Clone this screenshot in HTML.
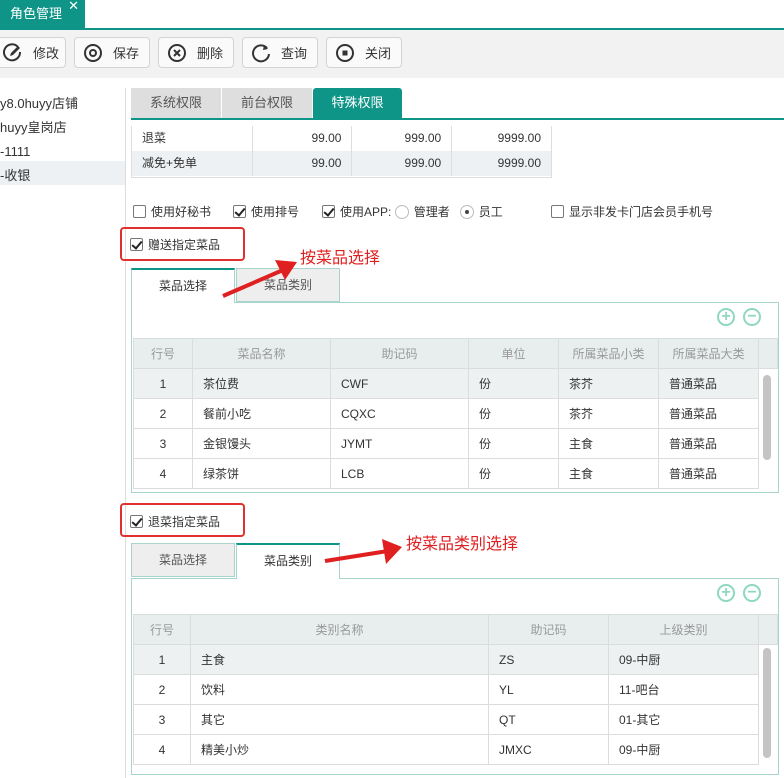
<!DOCTYPE html>
<html><head><meta charset="utf-8"><style>
*{margin:0;padding:0;box-sizing:border-box}
body{width:784px;height:778px;overflow:hidden;background:#fff;font-family:"Liberation Sans","Noto Sans CJK SC",sans-serif;font-size:12px;color:#333;position:relative}
.a{position:absolute}
.btn{position:absolute;top:37px;height:31px;border:1px solid #d4d4d4;border-radius:4px;background:#fafafa;font-size:13px;display:flex;align-items:center;padding-left:8px;gap:10px;color:#333}
.btn svg{width:20px;height:20px}
table{border-collapse:collapse;table-layout:fixed}
td{border:1px solid #dcdcdc;height:30px;padding:0 10px;white-space:nowrap}
th{border:1px solid #d8dede;height:30px;font-weight:normal;color:#999;background:#e8eeee}
.cb{display:inline-block;width:13px;height:13px;border:1px solid #777;border-radius:2px;vertical-align:-2px;margin-right:5px;position:relative;background:#fff}
.cb.on::after{content:"";position:absolute;left:3px;top:0px;width:4px;height:8px;border:solid #222;border-width:0 2px 2px 0;transform:rotate(40deg)}
.rd{display:inline-block;width:14px;height:14px;border:1px solid #bbb;border-radius:50%;vertical-align:-3px;margin-right:5px;position:relative}
.rd.on::after{content:"";position:absolute;left:4px;top:4px;width:4px;height:4px;border-radius:50%;background:#444}
.red{position:absolute;border:2px solid #e03030;border-radius:4px}
.tab{position:absolute;height:34px;text-align:center;line-height:32px;font-size:12px;border:1px solid #a8d4cc}
.panel{position:absolute;left:131px;width:648px;border:1px solid #a8d4cc}
.ic{position:absolute;width:18px;height:18px;border:2px solid #8fd8c0;border-radius:50%;color:#8fd8c0;font-weight:bold;text-align:center;line-height:13px;font-size:16px}
.sb{position:absolute;width:8px;background:#c4c4c4;border-radius:4px}
.hl td{background:#edf1f2}
</style></head><body>
<div class="a" style="left:0;top:0;width:85px;height:29px;background:#0f9488;color:#fff;font-size:13px;line-height:28px;padding-left:10px">角色管理<span style="position:absolute;right:6px;top:-8px;font-size:13px">✕</span></div>
<div class="a" style="left:0;top:28px;width:784px;height:2px;background:#0f9488"></div>
<div class="a" style="left:0;top:30px;width:784px;height:48px;background:#f2f2f2"></div>
<div class="btn" style="left:-6px;width:72px"><svg viewBox="0 0 20 20"><path d="M15 4A8 8 0 1 0 17 9" fill="none" stroke="#333" stroke-width="2"/><path d="M7 13l1-3 7-7 2 2-7 7z" fill="#333"/></svg>修改</div>
<div class="btn" style="left:74px;width:76px"><svg viewBox="0 0 20 20"><circle cx="10" cy="10" r="8" fill="none" stroke="#333" stroke-width="2"/><circle cx="10" cy="10" r="3" fill="none" stroke="#333" stroke-width="2"/></svg>保存</div>
<div class="btn" style="left:158px;width:76px"><svg viewBox="0 0 20 20"><circle cx="10" cy="10" r="8" fill="none" stroke="#333" stroke-width="2"/><path d="M7 7l6 6M13 7l-6 6" stroke="#333" stroke-width="2"/></svg>删除</div>
<div class="btn" style="left:242px;width:76px"><svg viewBox="0 0 20 20"><path d="M16 5A8 8 0 1 0 18 11" fill="none" stroke="#333" stroke-width="2"/><path d="M13 2l4 4-5 1z" fill="#333"/></svg>查询</div>
<div class="btn" style="left:326px;width:76px"><svg viewBox="0 0 20 20"><circle cx="10" cy="10" r="8" fill="none" stroke="#333" stroke-width="2"/><rect x="7.5" y="7.5" width="5" height="5" fill="#333"/></svg>关闭</div>
<div class="a" style="left:125px;top:88px;width:1px;height:690px;background:#ddd"></div>
<div class="a" style="left:0;top:161px;width:125px;height:24px;background:#eef1f4"></div>
<div class="a" style="left:0;top:92px;font-size:13px;line-height:24px">y8.0huyy店铺<br>huyy皇岗店<br>-1111<br>-收银</div>
<div class="a" style="left:131px;top:88px;width:90px;height:30px;background:#dedede;text-align:center;line-height:30px;color:#555;font-size:13px">系统权限</div>
<div class="a" style="left:222px;top:88px;width:90px;height:30px;background:#dedede;text-align:center;line-height:30px;color:#555;font-size:13px">前台权限</div>
<div class="a" style="left:313px;top:88px;width:89px;height:30px;background:#0f9488;border-radius:3px 3px 0 0;text-align:center;line-height:30px;color:#fff;font-size:13px">特殊权限</div>
<div class="a" style="left:131px;top:118px;width:653px;height:2px;background:#0f9488"></div>
<div class="a" style="left:131px;top:126px;width:421px;height:52px;border:1px solid #ddd;border-top:none;font-size:12px">
<div style="height:25px;display:flex;line-height:25px"><div style="width:120px;padding-left:10px">退菜</div><div style="width:100px;text-align:right;padding-right:10px;border-left:1px solid #ddd">99.00</div><div style="width:100px;text-align:right;padding-right:10px;border-left:1px solid #ddd">999.00</div><div style="width:100px;text-align:right;padding-right:10px;border-left:1px solid #ddd">9999.00</div></div>
<div style="height:25px;display:flex;line-height:25px;background:#edf1f4"><div style="width:120px;padding-left:10px">减免+免单</div><div style="width:100px;text-align:right;padding-right:10px;border-left:1px solid #ddd">99.00</div><div style="width:100px;text-align:right;padding-right:10px;border-left:1px solid #ddd">999.00</div><div style="width:100px;text-align:right;padding-right:10px;border-left:1px solid #ddd">9999.00</div></div>
</div>
<div class="a" style="left:133px;top:203px;font-size:12px;white-space:nowrap"><span class="cb"></span>使用好秘书</div>
<div class="a" style="left:233px;top:203px"><span class="cb on"></span>使用排号</div>
<div class="a" style="left:322px;top:203px;white-space:nowrap"><span class="cb on"></span>使用APP: <span class="rd"></span>管理者 &nbsp;&nbsp;<span class="rd on"></span>员工</div>
<div class="a" style="left:551px;top:203px;white-space:nowrap"><span class="cb"></span>显示非发卡门店会员手机号</div>
<div class="red" style="left:120px;top:227px;width:125px;height:34px"></div>
<div class="a" style="left:130px;top:236px"><span class="cb on"></span>赠送指定菜品</div>
<div class="a" style="left:300px;top:244px;color:#e02020;font-size:16px">按菜品选择</div>
<div class="panel" style="top:302px;height:191px"></div>
<div class="tab" style="left:131px;top:268px;width:104px;background:#fff;border-top:2px solid #0f9488;border-bottom:none;height:35px;color:#333">菜品选择</div>
<div class="tab" style="left:236px;top:268px;width:104px;background:#eee;color:#555">菜品类别</div>
<svg class="a" style="left:215px;top:250px" width="90" height="55"><path d="M8 46L68 20" stroke="#e02020" stroke-width="4"/><path d="M60 10L82 12 70 30z" fill="#e02020"/></svg>
<div class="ic" style="left:717px;top:308px">+</div><div class="ic" style="left:743px;top:308px">−</div>
<table class="a" style="left:133px;top:338px;width:644px">
<colgroup><col style="width:59px"><col style="width:138px"><col style="width:138px"><col style="width:90px"><col style="width:100px"><col style="width:100px"><col style="width:19px"></colgroup>
<tr><th>行号</th><th>菜品名称</th><th>助记码</th><th>单位</th><th>所属菜品小类</th><th>所属菜品大类</th><th></th></tr>
<tr class="hl"><td style="text-align:center">1</td><td>茶位费</td><td>CWF</td><td>份</td><td>茶芥</td><td>普通菜品</td><td style="background:#fff;border:none"></td></tr>
<tr><td style="text-align:center">2</td><td>餐前小吃</td><td>CQXC</td><td>份</td><td>茶芥</td><td>普通菜品</td><td style="border:none"></td></tr>
<tr><td style="text-align:center">3</td><td>金银馒头</td><td>JYMT</td><td>份</td><td>主食</td><td>普通菜品</td><td style="border:none"></td></tr>
<tr><td style="text-align:center">4</td><td>绿茶饼</td><td>LCB</td><td>份</td><td>主食</td><td>普通菜品</td><td style="border:none"></td></tr>
</table>
<div class="sb" style="left:763px;top:375px;height:85px"></div>
<div class="red" style="left:120px;top:503px;width:125px;height:34px"></div>
<div class="a" style="left:130px;top:513px"><span class="cb on"></span>退菜指定菜品</div>
<div class="a" style="left:406px;top:530px;color:#e02020;font-size:16px">按菜品类别选择</div>
<div class="panel" style="top:578px;height:197px"></div>
<div class="tab" style="left:131px;top:543px;width:104px;background:#eee;color:#555">菜品选择</div>
<div class="tab" style="left:236px;top:543px;width:104px;background:#fff;border-top:2px solid #0f9488;border-bottom:none;height:36px;color:#333">菜品类别</div>
<svg class="a" style="left:320px;top:530px" width="90" height="40"><path d="M5 31L68 21" stroke="#e02020" stroke-width="4"/><path d="M62 9L82 17 66 34z" fill="#e02020"/></svg>
<div class="ic" style="left:717px;top:584px">+</div><div class="ic" style="left:743px;top:584px">−</div>
<table class="a" style="left:133px;top:614px;width:644px">
<colgroup><col style="width:57px"><col style="width:298px"><col style="width:120px"><col style="width:150px"><col style="width:19px"></colgroup>
<tr><th>行号</th><th>类别名称</th><th>助记码</th><th>上级类别</th><th></th></tr>
<tr class="hl"><td style="text-align:center">1</td><td>主食</td><td>ZS</td><td>09-中厨</td><td style="background:#fff;border:none"></td></tr>
<tr><td style="text-align:center">2</td><td>饮料</td><td>YL</td><td>11-吧台</td><td style="border:none"></td></tr>
<tr><td style="text-align:center">3</td><td>其它</td><td>QT</td><td>01-其它</td><td style="border:none"></td></tr>
<tr><td style="text-align:center">4</td><td>精美小炒</td><td>JMXC</td><td>09-中厨</td><td style="border:none"></td></tr>
</table>
<div class="sb" style="left:763px;top:648px;height:110px"></div>
</body></html>
